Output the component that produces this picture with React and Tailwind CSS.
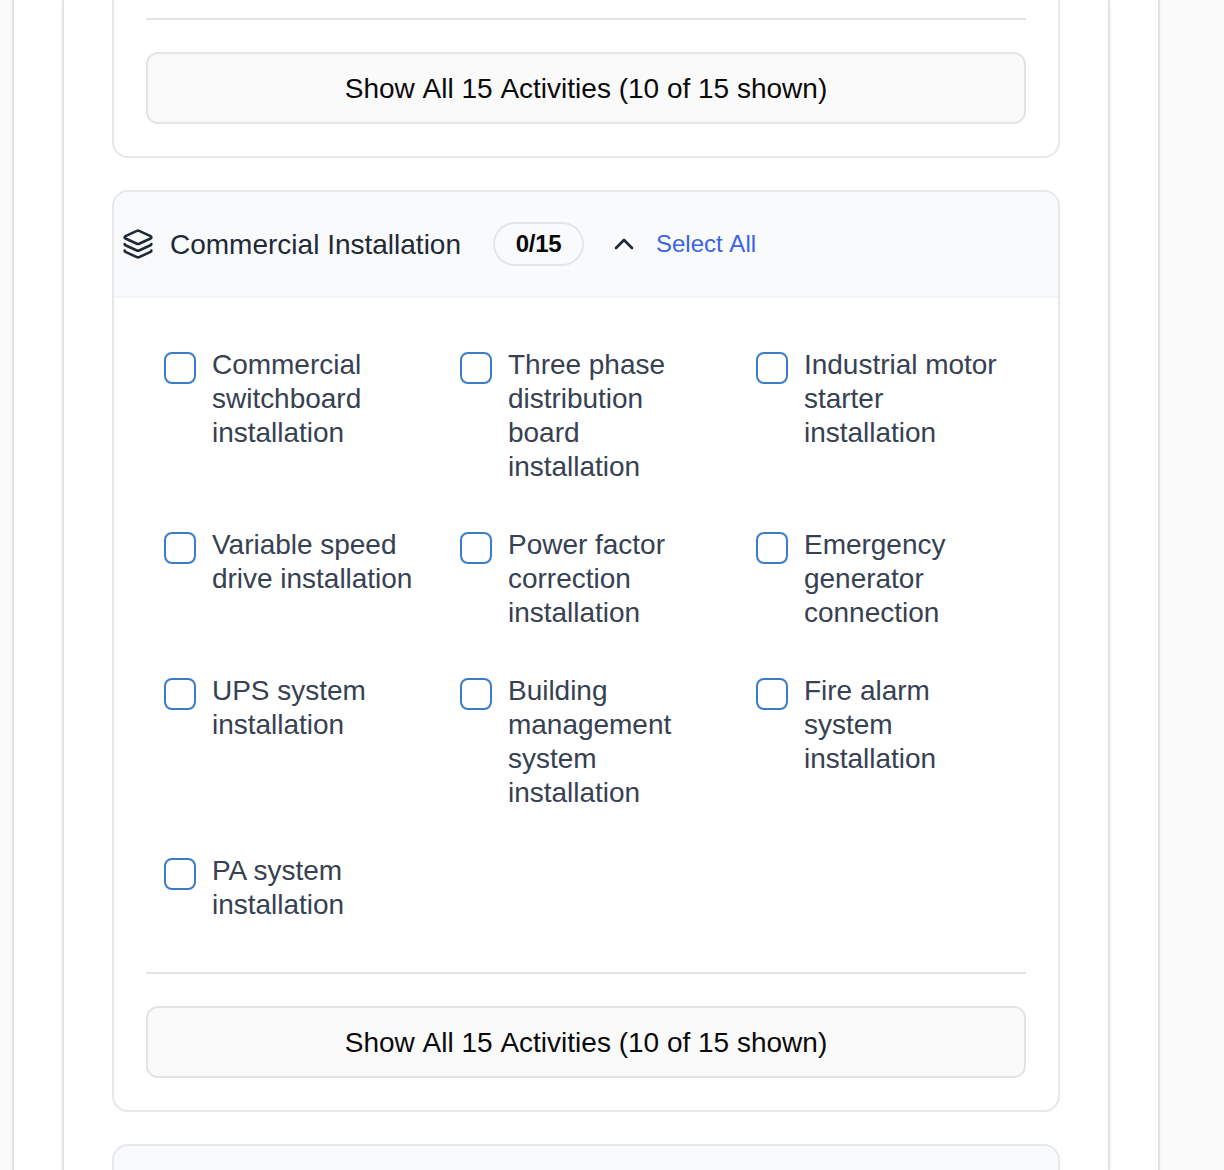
import { ChevronUp, Layers } from "lucide-react";

const activities = [
  "Commercial switchboard installation",
  "Three phase distribution board installation",
  "Industrial motor starter installation",
  "Variable speed drive installation",
  "Power factor correction installation",
  "Emergency generator connection",
  "UPS system installation",
  "Building management system installation",
  "Fire alarm system installation",
  "PA system installation",
];

function ShowAllFooter() {
  return (
    <div className="border-t-2 border-[#e4e4e4] pt-8">
      <button className="flex h-[72px] w-full items-center justify-center rounded-xl border-2 border-[#e4e4e4] bg-[#fafafa] pt-0.5 text-[28px] text-[#0a0a0a] [font-kerning:none]">
        Show All 15 Activities (10 of 15 shown)
      </button>
    </div>
  );
}

function Activity({ label }) {
  return (
    <label className="flex items-start gap-4 p-[18px]">
      <span className="mt-1 size-8 shrink-0 rounded-lg border-2 border-[#3b7bc8] bg-white" />
      <span className="text-[28px] leading-[34px] tracking-[-0.02px] text-[#374151]">{label}</span>
    </label>
  );
}

export default function App() {
  return (
    <div className="h-[1170px] overflow-hidden bg-[#fafafa] pl-3 font-['Liberation_Sans',Arial,sans-serif]">
      <div className="h-full w-[1148px] border-x-2 border-[#e4e4e4] bg-white px-12 shadow-[0_2px_4px_rgba(0,0,0,0.05)]">
        <div className="h-full border-x-2 border-[#e4e4e4] bg-white px-12 shadow-[0_2px_4px_rgba(0,0,0,0.05)]">
          <section className="h-[158px] rounded-b-2xl border-x-2 border-b-2 border-[#e5e7eb] px-8 pt-[18px]">
            <ShowAllFooter />
          </section>

          <section className="mt-8 overflow-hidden rounded-2xl border-2 border-[#e5e7eb]">
            <header className="flex h-[106px] items-center border-b-2 border-[#f3f4f6] bg-[#f9fafc] pl-2 text-[#1f2937]">
              <Layers className="size-8" strokeWidth={2} />
              <h2 className="ml-4 pt-0.5 text-[28px]">Commercial Installation</h2>
              <span className="ml-8 flex h-11 w-[91px] items-center justify-center rounded-full border-2 border-[#e5e5e5] text-2xl font-bold tracking-[-0.3px] text-[#0a0a0a]">
                0/15
              </span>
              <ChevronUp className="ml-6 size-8" strokeWidth={2} />
              <button className="ml-4 text-2xl text-[#3b63e8] [font-kerning:none]">Select All</button>
            </header>
            <div className="p-8">
              <div className="mb-8 grid grid-cols-3 gap-2">
                {activities.map((label) => (
                  <Activity key={label} label={label} />
                ))}
              </div>
              <ShowAllFooter />
            </div>
          </section>

          <section className="mt-8 h-40 rounded-t-2xl border-2 border-[#e5e7eb] bg-[#f9fafc]" />
        </div>
      </div>
    </div>
  );
}
